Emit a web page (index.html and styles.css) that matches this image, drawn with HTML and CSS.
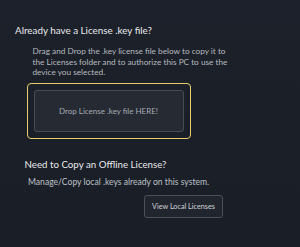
FILE: index.html
```html
<!DOCTYPE html>
<html lang="en">
<head>
<meta charset="utf-8">
<title>License</title>
<link rel="stylesheet" href="styles.css">
</head>
<body>
<main class="page">
  <section class="import">
    <h2 class="title">Already have a License .key file?</h2>
    <p class="desc">Drag and Drop the .key license file below to copy it to the Licenses folder and to authorize this PC to use the device you selected.</p>
    <div class="drop-frame">
      <div class="drop-zone">Drop License .key file HERE!</div>
    </div>
  </section>
  <section class="offline">
    <h3 class="subtitle">Need to Copy an Offline License?</h3>
    <p class="note">Manage/Copy local .keys already on this system.</p>
    <div class="actions">
      <button class="btn" type="button">View Local Licenses</button>
    </div>
  </section>
</main>
</body>
</html>
```
FILE: styles.css
```css
html, body {
  margin: 0;
  padding: 0;
  height: 100%;
}
body {
  background: linear-gradient(180deg, #1d212b 0%, #1b1f27 40%, #1a1e26 100%);
  font-family: Lato, "Noto Sans", sans-serif;
  color: #e6e8ec;
}
.page {
  display: flex;
  flex-direction: column;
  padding: 24px 0 0 15px;
}
.import {
  display: flex;
  flex-direction: column;
}
.title {
  margin: 0;
  font-size: 9.83px;
  font-weight: 400;
  line-height: 13px;
  color: #e8e9ec;
}
.desc {
  margin: 9px 0 0 17.5px;
  width: 198px;
  font-size: 8.24px;
  line-height: 10.5px;
  color: #b5b9bf;
}
.drop-frame {
  margin: 5.5px 0 0 12px;
  width: 164px;
  height: 56px;
  box-sizing: border-box;
  border: 1.5px solid #e8cd6e;
  border-radius: 4px;
  padding: 6px 6.5px 6.5px 5.5px;
  display: flex;
}
.drop-zone {
  flex: 1;
  border: 1px solid #474d57;
  border-radius: 3px;
  background: #252a33;
  display: flex;
  align-items: center;
  justify-content: center;
  font-size: 7.99px;
  color: #a6aab1;
}
.offline {
  display: flex;
  flex-direction: column;
  margin: 19px 0 0 9.5px;
}
.subtitle {
  margin: 0;
  font-size: 9.72px;
  font-weight: 400;
  line-height: 13px;
  color: #e8e9ec;
}
.note {
  margin: 4.5px 0 0 3.5px;
  font-size: 8.58px;
  line-height: 12px;
  color: #bcc0c6;
}
.actions {
  display: flex;
  padding-left: 119.5px;
  margin-top: 7.5px;
}
.btn {
  width: 79px;
  height: 23px;
  border: 1px solid #4b515b;
  border-radius: 3px;
  background: #21252e;
  color: #d0d3d7;
  font-family: inherit;
  font-size: 7.26px;
  padding: 0;
}
```
